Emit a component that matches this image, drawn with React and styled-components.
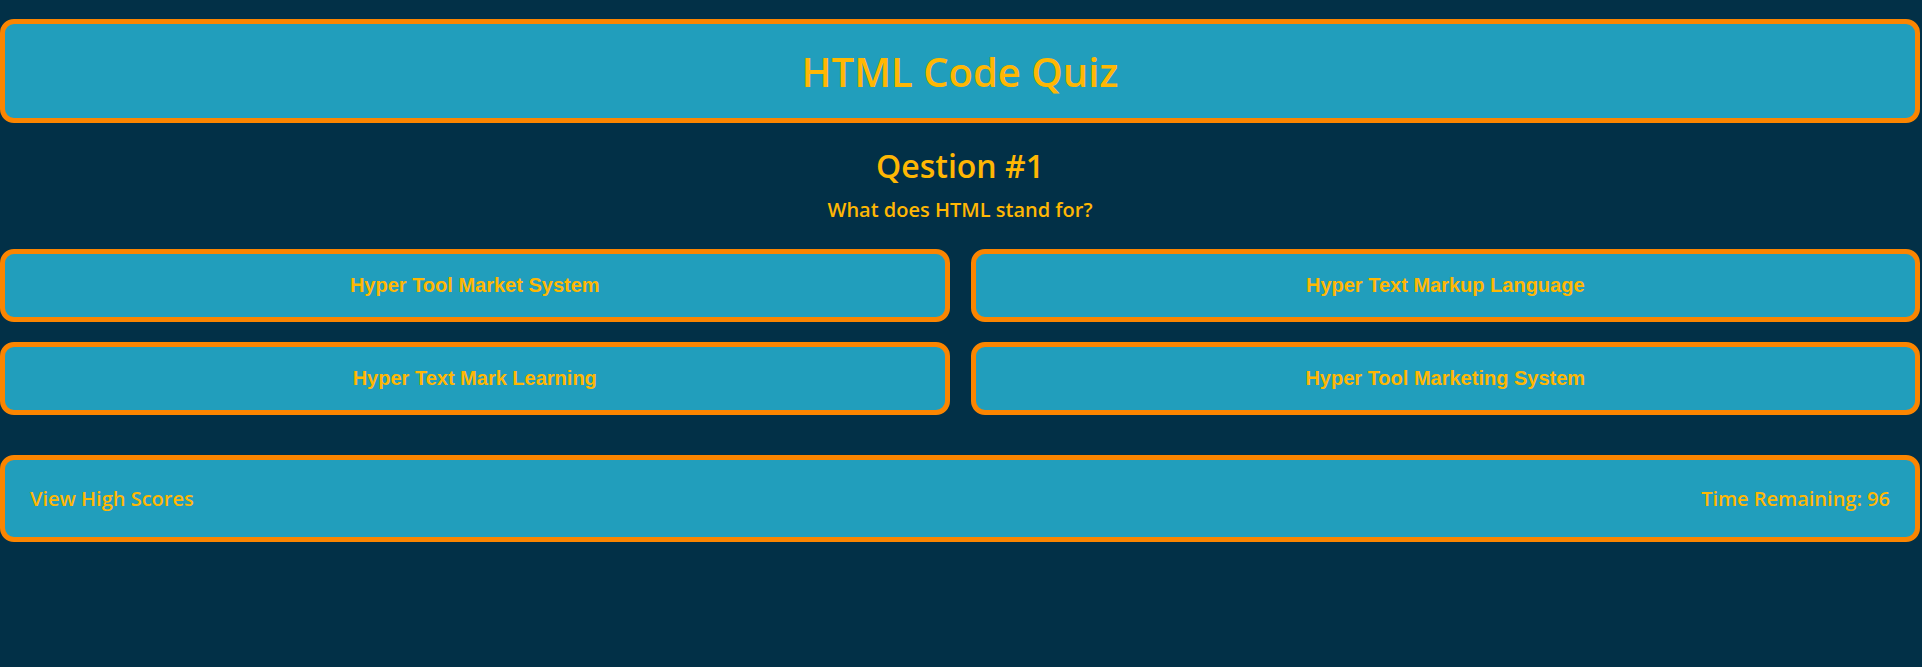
import React from "react"
import styled, { createGlobalStyle } from "styled-components"

const GlobalStyle = createGlobalStyle`
  body {
    margin: 0;
    background-color: #023047;
    font-family: "Open Sans", "Liberation Sans", sans-serif;
  }
`

const StyledPage = styled.main`
  padding: 19px 2px 0 0;
  color: #ffb703;
`

const Panel = styled.div`
  background-color: #219ebc;
  border: 5px solid #fb8500;
  border-radius: 14px;
`

const Header = styled(Panel)`
  height: 94px;
  display: flex;
  align-items: center;
  justify-content: center;

  h1 {
    margin: 0;
    font-size: 40px;
    font-weight: 600;
  }
`

const QuestionBlock = styled.section`
  text-align: center;
  padding-top: 23px;

  h2 {
    margin: 0;
    font-size: 32px;
    font-weight: 600;
    line-height: 40px;
  }

  p {
    margin: 10px 0 0;
    font-size: 20px;
    font-weight: 600;
    line-height: 27px;
  }
`

const Answers = styled.div`
  display: grid;
  grid-template-columns: 1fr 1fr;
  column-gap: 21px;
  row-gap: 20px;
  margin-top: 26px;
`

const AnswerButton = styled.button`
  height: 73px;
  background-color: #219ebc;
  border: 5px solid #fb8500;
  border-radius: 14px;
  color: #ffb703;
  font-family: "Liberation Sans", Arial, sans-serif;
  font-size: 20px;
  font-weight: 700;
  cursor: pointer;
`

const Footer = styled(Panel)`
  margin-top: 40px;
  height: 77px;
  padding: 0 25px 0 25px;
  display: flex;
  align-items: center;
  justify-content: space-between;
  font-size: 20px;
  font-weight: 600;

  a {
    color: #ffb703;
    text-decoration: none;
  }
`

const answers = [
  "Hyper Tool Market System",
  "Hyper Text Markup Language",
  "Hyper Text Mark Learning",
  "Hyper Tool Marketing System",
]

const App = () => {
  return (
    <>
      <GlobalStyle />
      <StyledPage>
        <Header>
          <h1>HTML Code Quiz</h1>
        </Header>

        <QuestionBlock>
          <h2>Qestion #1</h2>
          <p>What does HTML stand for?</p>
        </QuestionBlock>

        <Answers>
          {answers.map(answer => (
            <AnswerButton key={answer}>{answer}</AnswerButton>
          ))}
        </Answers>

        <Footer>
          <a href="#highscores">View High Scores</a>
          <span>Time Remaining: 96</span>
        </Footer>
      </StyledPage>
    </>
  )
}

export default App
